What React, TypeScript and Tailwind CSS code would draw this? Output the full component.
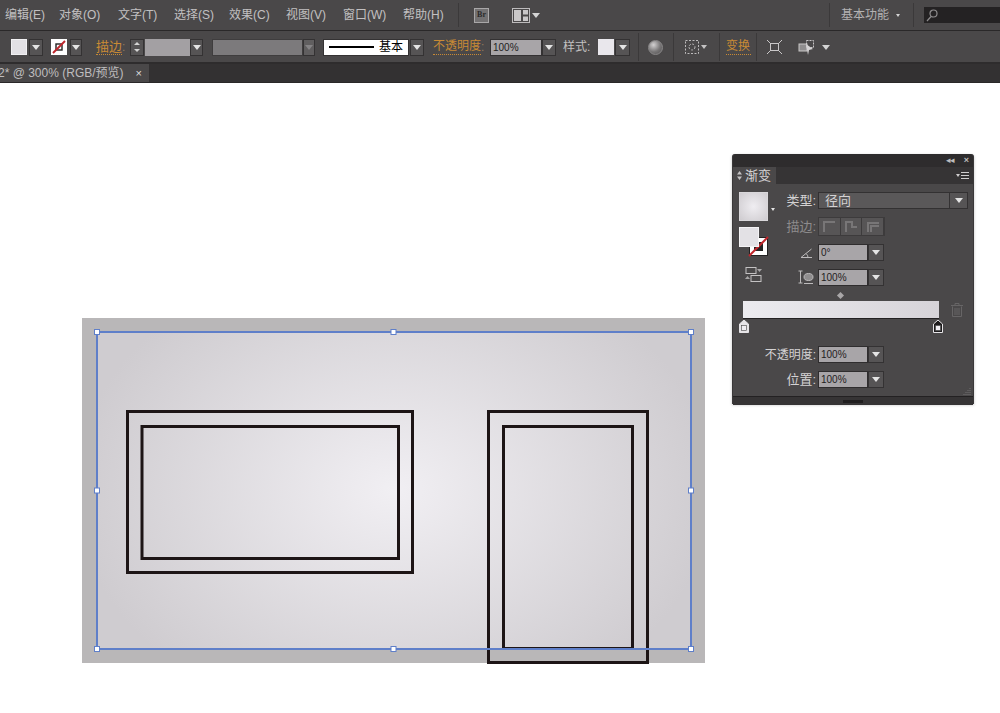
import React from 'react';

const Caret = ({ className = 'border-t-[#e4e4e4]' }: { className?: string }) => (
  <span className={`block w-0 h-0 border-x-[4px] border-x-transparent border-t-[5px] ${className}`} />
);

const Drop = ({ className = '', dim = false }: { className?: string; dim?: boolean }) => (
  <span className={`flex items-center justify-center h-full bg-[#565455] border border-[#343233] ${className}`}>
    <Caret className={dim ? 'border-t-[#858385]' : 'border-t-[#e4e4e4]'} />
  </span>
);

const Sep = ({ className = '' }: { className?: string }) => (
  <span className={`block w-px h-full bg-[#5c5a5b] border-l border-[#3b393a] ${className}`} />
);

const menus = [
  { label: '编辑(E)', w: 'w-[54px]' },
  { label: '对象(O)', w: 'w-[59px]' },
  { label: '文字(T)', w: 'w-[56px]' },
  { label: '选择(S)', w: 'w-[55px]' },
  { label: '效果(C)', w: 'w-[57px]' },
  { label: '视图(V)', w: 'w-[57px]' },
  { label: '窗口(W)', w: 'w-[60px]' },
  { label: '帮助(H)', w: 'w-[55px]' },
];

const MenuBar = () => (
  <div className="h-[31px] bg-[#4a4849] border-b border-[#2a2829] flex items-center pl-[5px] text-[12px] text-[#c2c0c1] shrink-0">
    {menus.map((m) => (
      <span key={m.label} className={`${m.w} whitespace-nowrap`}>{m.label}</span>
    ))}
    <Sep className="!h-[24px]" />
    <span className="ml-[15px] w-[15px] h-[15px] bg-[#737172] border border-[#a9a7a8] text-[8px] font-bold text-[#2b2a2a] flex items-center justify-center leading-none font-['Liberation_Serif',serif]">Br</span>
    <svg className="ml-[23px]" width="18" height="15" viewBox="0 0 18 15">
      <rect x="0.5" y="0.5" width="17" height="14" fill="#4a4849" stroke="#bdbbbc" />
      <rect x="2" y="2" width="7" height="11" fill="#c9c7c8" />
      <rect x="11" y="2" width="5" height="4.5" fill="#c9c7c8" />
      <rect x="11" y="8.5" width="5" height="4.5" fill="#c9c7c8" />
    </svg>
    <Caret className="ml-[2px] border-t-[#d4d4d4]" />
    <Sep className="ml-[289px] !h-[24px]" />
    <span className="ml-[11px] w-[47px] whitespace-nowrap text-[#b4b2b3]">基本功能</span>
    <Caret className="ml-[8px] !border-x-[2.5px] !border-t-[3px] border-t-[#d4d4d4]" />
    <Sep className="ml-[13px] !h-[24px]" />
    <span className="ml-[10px] flex-1 h-[16px] bg-[#242223] flex items-center pl-[2px]">
      <svg width="12" height="13" viewBox="0 0 12 13" fill="none" stroke="#8f8d8e" strokeWidth="1.2">
        <circle cx="7.5" cy="4.5" r="3.5" />
        <path d="M5 7.5 1 12" />
      </svg>
    </span>
  </div>
);

const ControlBar = () => (
  <div className="h-[33px] pt-[1px] bg-[#4a4849] border-b-2 border-[#2e2c2d] flex items-center pl-[11px] text-[12px] text-[#c2c0c1] shrink-0">
    <span className="w-[16px] h-[16px] bg-[#e2e0e4] border border-[#f1f0f2]" />
    <Drop className="ml-[2px] w-[14px] !h-[17px]" />
    <span className="ml-[8px] w-[16px] h-[16px] bg-white flex items-center justify-center">
      <svg width="16" height="16" viewBox="0 0 16 16" fill="none">
        <rect x="5" y="5" width="6" height="6" stroke="#222" strokeWidth="1.4" />
        <path d="M2 14 14 2" stroke="#c0272d" strokeWidth="2" />
      </svg>
    </span>
    <Drop className="ml-[3px] w-[12px] !h-[17px]" />
    <span className="ml-[14px] w-[26px] text-[13px] whitespace-nowrap text-[#c88a35] border-b border-dotted border-[#c88a35] leading-[15px]">描边</span>
    <span className="w-[8px] text-[#8f7a5c]">:</span>
    <span className="w-[14px] h-[17px] flex flex-col bg-[#565455] border border-[#343233] items-center justify-around">
      <Caret className="rotate-180 !border-x-[3px] !border-t-[3px] border-t-[#d4d4d4]" />
      <Caret className="!border-x-[3px] !border-t-[3px] border-t-[#d4d4d4]" />
    </span>
    <span className="ml-px w-[45px] h-[17px] bg-[#a3a0a3]" />
    <Drop className="w-[13px] !h-[17px]" />
    <span className="ml-[9px] w-[91px] h-[17px] bg-[#7c7a7c] border border-[#3f3d3e]" />
    <Drop className="w-[12px] !h-[17px] !bg-[#605e5f]" dim />
    <span className="ml-[8px] w-[86px] h-[17px] bg-white border border-[#343233] flex items-center text-black pl-[5px]">
      <span className="w-[45px] h-[2px] bg-black shrink-0" />
      <span className="ml-[5px] text-[12px] whitespace-nowrap leading-none">基本</span>
    </span>
    <Drop className="ml-[1px] w-[14px] !h-[17px]" />
    <span className="ml-[9px] w-[48px] text-[12px] whitespace-nowrap text-[#c88a35] border-b border-dotted border-[#c88a35] leading-[15px]">不透明度</span>
    <span className="w-[9px] text-[#8f7a5c]">:</span>
    <span className="w-[52px] h-[17px] bg-[#a8a5a8] text-[#222] text-[10px] pl-[2px] flex items-center border border-[#343233]">100%</span>
    <Drop className="w-[14px] !h-[17px]" />
    <span className="ml-[7px] w-[28px] whitespace-nowrap">样式:</span>
    <span className="ml-[7px] w-[16px] h-[16px] bg-[#e9e7ec]" />
    <Drop className="ml-px w-[15px] !h-[17px]" />
    <Sep className="ml-[8px] !h-[28px]" />
    <span className="ml-[9px] w-[15px] h-[15px] rounded-full bg-[radial-gradient(circle_at_35%_30%,#d2d0d1,#777576_55%,#4f4d4e)] border border-[#8a8889]" />
    <Sep className="ml-[10px] !h-[28px]" />
    <svg className="ml-[11px]" width="14" height="14" viewBox="0 0 14 14" fill="none" stroke="#bdbbbc" strokeDasharray="2 1.5">
      <rect x="0.5" y="0.5" width="13" height="13" />
      <circle cx="7" cy="7" r="3" />
    </svg>
    <Caret className="ml-[2px] !border-x-[3.5px] !border-t-[4px] border-t-[#c4c2c3]" />
    <Sep className="ml-[12px] !h-[28px]" />
    <span className="ml-[6px] w-[25px] text-[12px] whitespace-nowrap text-[#c88a35] border-b border-dotted border-[#c88a35] leading-[15px]">变换</span>
    <Sep className="ml-[5px] !h-[28px]" />
    <svg className="ml-[10px]" width="15" height="14" viewBox="0 0 15 14" fill="none" stroke="#c9c7c8">
      <rect x="3.5" y="3.5" width="8" height="7" />
      <path d="M0 0 3 3M15 0 12 3M0 14 3 11M15 14 12 11" />
    </svg>
    <svg className="ml-[16px]" width="18" height="15" viewBox="0 0 18 15" fill="none">
      <rect x="1" y="4" width="8" height="7" fill="#8f8d8e" stroke="#c9c7c8" />
      <rect x="8.5" y="0.5" width="7" height="7" stroke="#c9c7c8" strokeDasharray="2 1" />
      <path d="M8 4 15 9 11 10 10 15Z" fill="#d6d4d5" />
    </svg>
    <Caret className="ml-[6px] border-t-[#d4d4d4]" />
  </div>
);

const TabBar = () => (
  <div className="h-[19px] bg-[#333132] flex shrink-0 border-b border-[#2a2829] overflow-hidden">
    <span className="w-[149px] bg-[#4a4849] text-[12px] text-[#bfbdbe] flex items-center whitespace-nowrap leading-none">
      <span className="ml-[-2px]">2* @ 300% (RGB/预览)</span>
      <span className="ml-[12px] text-[11px] text-[#dedcdd]">×</span>
    </span>
  </div>
);

const Artwork = () => (
  <svg className="absolute left-[82px] top-[235px]" width="624" height="346" viewBox="82 318 624 346">
    <defs>
      <radialGradient id="fill" cx="394" cy="490" r="320" gradientUnits="userSpaceOnUse" gradientTransform="translate(394 490) scale(1 0.75) translate(-394 -490)">
        <stop offset="0" stopColor="#f1eff3" />
        <stop offset="1" stopColor="#cfccd0" />
      </radialGradient>
    </defs>
    <rect x="82" y="318" width="623" height="345" fill="#b9b7b8" />
    <rect x="97" y="332" width="594" height="317" fill="url(#fill)" />
    <g fill="none" stroke="#1d1516" strokeWidth="3">
      <rect x="127.5" y="411.5" width="285" height="161" />
      <rect x="142" y="426.5" width="256.5" height="132" />
      <rect x="488.5" y="411.5" width="159" height="251" />
      <rect x="503.5" y="426.5" width="129" height="222" />
    </g>
    <rect x="97" y="332" width="594" height="317" fill="none" stroke="#5f7fc9" strokeWidth="2" />
    {[
      [97, 332], [393.5, 332], [691, 332],
      [97, 490.5], [691, 490.5],
      [97, 649], [393.5, 649], [691, 649],
    ].map(([x, y]) => (
      <rect key={`${x}-${y}`} x={x - 2.5} y={y - 2.5} width="5" height="5" fill="#fff" stroke="#5f7fc9" />
    ))}
  </svg>
);

const Field = ({ value }: { value: string }) => (
  <span className="flex h-[17px] w-[66px]">
    <span className="w-[50px] bg-[#a8a5a8] border border-[#2f2d2e] text-[#1f1d1e] text-[10px] leading-none pl-[2px] flex items-center">{value}</span>
    <Drop className="w-[16px]" />
  </span>
);

const Row = ({ label, className = '', children }: { label?: React.ReactNode; className?: string; children: React.ReactNode }) => (
  <div className={`flex items-center leading-none ${className}`}>
    <span className="w-[33px] pr-[2px] flex justify-end whitespace-nowrap text-[13px]">{label}</span>
    {children}
  </div>
);

const Stop = ({ active = false }: { active?: boolean }) => (
  <svg width="10" height="13" viewBox="0 0 10 13">
    <path d="M5 0 9.5 4V12.5H.5V4Z" fill={active ? '#1d1b1c' : '#e6e4e7'} stroke="#e6e4e7" />
    <rect x="2.5" y="5.5" width="5" height="5" fill="#f0eef2" stroke="#444" strokeWidth="0.6" />
  </svg>
);

const GradientPanel = () => (
  <div className="absolute left-[732px] top-[71px] w-[242px] h-[250px] bg-[#4a4849] rounded-t-[3px] text-[12px] text-[#d4d2d3] flex flex-col shadow-[0_1px_3px_rgba(0,0,0,0.25)] border-x border-[#3a3839]">
    <div className="h-[13px] bg-[#2e2c2d] rounded-t-[3px] flex items-center justify-end pr-[4px] gap-[10px] text-[#bdbbbc] text-[9px] leading-none shrink-0">
      <span className="tracking-[-1px]">◂◂</span>
      <span className="font-bold">×</span>
    </div>
    <div className="h-[17px] bg-[#363435] flex items-stretch shrink-0">
      <span className="w-[43px] bg-[#4a4849] flex items-center pl-[4px] gap-[3px] whitespace-nowrap leading-none text-[13px]">
        <svg width="5" height="9" viewBox="0 0 5 9" fill="#c4c2c3"><path d="M2.500 0 5 3.500H0ZM2.500 9 5 5.500H0Z" /></svg>
        渐变
      </span>
      <span className="ml-auto mr-[4px] flex items-center gap-px">
        <Caret className="!border-x-[2.5px] !border-t-[3px] border-t-[#cfcdce]" />
        <svg width="8" height="7" viewBox="0 0 8 7" stroke="#cfcdce"><path d="M0 .5H8M0 3.5H8M0 6.5H8" /></svg>
      </span>
    </div>

    <div className="flex pt-[8px] pl-[6px]">
      <div className="w-[46px] shrink-0 flex flex-col">
        <div className="flex items-end">
          <span className="w-[29px] h-[29px] border border-[#d9d7da] bg-[radial-gradient(circle,#efedf1,#cfccd0)]" />
          <Caret className="ml-[3px] mb-[10px] !border-x-[2.5px] !border-t-[3px] border-t-[#e4e4e4]" />
        </div>
        <svg className="mt-[6px]" width="30" height="30" viewBox="0 0 30 30">
          <rect x="10.5" y="10.5" width="18" height="18" fill="#fff" stroke="#222" />
          <rect x="15" y="15" width="9" height="9" fill="#222" />
          <path d="M10 29 29 10" stroke="#c0272d" strokeWidth="2" />
          <rect x="0.5" y="0.5" width="19" height="19" fill="#e3e1e5" stroke="#f4f3f5" />
        </svg>
        <svg className="ml-[6px] mt-[10px]" width="17" height="15" viewBox="0 0 17 15" fill="#a9a7a8">
          <rect x="1" y="0.5" width="10" height="6" fill="none" stroke="#c4c2c3" />
          <path d="M12 2h5l-2.5 3z" />
          <rect x="6" y="8.5" width="10" height="6" fill="none" stroke="#c4c2c3" />
          <path d="M0 12h5L2.500 9z" />
        </svg>
      </div>
      <div className="flex flex-col">
        <Row label="类型:" className="h-[17px]">
          <span className="w-[150px] h-[17px] bg-[#5a5859] border border-[#333132] flex items-center pl-[6px] text-[13px]">
            <span className="flex-1 leading-none">径向</span>
            <Drop className="w-[18px] !border-y-0 !border-r-0" />
          </span>
        </Row>
        <Row label={<span className="text-[#8d8b8c]">描边:</span>} className="mt-[8px] h-[19px]">
          <span className="flex h-[19px] w-[67px] border border-[#3d3b3c]">
            {['M4 14V4H15', 'M4 14V4H10V9H15', 'M4 14V5H15M7 14V8H15'].map((d) => (
              <span key={d} className="flex-1 bg-[#575556] border-r border-[#3d3b3c] flex items-center justify-center">
                <svg width="18" height="17" viewBox="0 0 18 17" fill="none" stroke="#787677" strokeWidth="2"><path d={d} /></svg>
              </span>
            ))}
          </span>
        </Row>
        <Row
          className="mt-[8px] h-[17px]"
          label={
            <svg className="mr-[4px]" width="12" height="10" viewBox="0 0 12 10" fill="none" stroke="#bdbbbc">
              <path d="M11.500 1 1 9.500H12M6 5.500Q8 7 8 9.500" />
            </svg>
          }
        >
          <Field value="0°" />
        </Row>
        <Row
          className="mt-[8px] h-[17px]"
          label={
            <svg className="mr-[2px]" width="16" height="15" viewBox="0 0 16 15" fill="none" stroke="#bdbbbc">
              <path d="M2.500 1V13M.5 1H4.500M.5 13H4.500M6 13.500H15" />
              <ellipse cx="10.500" cy="7" rx="4.500" ry="3.500" fill="#8f8d8e" />
            </svg>
          }
        >
          <Field value="100%" />
        </Row>
      </div>
    </div>

    <div className="flex justify-center mt-[7px] pr-[26px] h-[6px] items-center">
      <span className="w-[5px] h-[5px] rotate-45 bg-[#a9a7a8]" />
    </div>

    <div className="flex items-center mt-[3px] pl-[10px]">
      <span className="w-[196px] h-[18px] bg-[linear-gradient(to_right,#ecebef,#d6d3d8)] border-b border-[#232122]" />
      <svg className="ml-[12px]" width="12" height="14" viewBox="0 0 12 14" fill="none" stroke="#676566">
        <path d="M0 2.500H12M4 2.500V.5H8V2.500M1.500 3.500V13.500H10.500V3.500M4 5V12M6 5V12M8 5V12" />
      </svg>
    </div>
    <div className="flex justify-between w-[210px] pl-[6px] mt-[1px] h-[13px]">
      <Stop />
      <Stop active />
    </div>

    <div className="mt-[13px] pl-[31px] flex flex-col gap-[8px] leading-none">
      <div className="flex items-center h-[17px]">
        <span className="w-[54px] pr-[2px] text-right whitespace-nowrap">不透明度:</span>
        <Field value="100%" />
      </div>
      <div className="flex items-center h-[17px]">
        <span className="w-[54px] pr-[2px] text-right whitespace-nowrap text-[13px]">位置:</span>
        <Field value="100%" />
      </div>
    </div>

    <div className="mt-auto flex justify-end pr-[2px]">
      <svg width="9" height="7" viewBox="0 0 9 7" stroke="#5e5c5d"><path d="M7 .5H9M5 2.500H9M3 4.500H9M1 6.500H9" /></svg>
    </div>
    <div className="mt-[1px] h-[9px] bg-[#363435] border-t border-[#232122] flex items-center justify-center shrink-0">
      <span className="w-[20px] h-[3px] bg-[#1f1d1e]" />
    </div>
  </div>
);

export default function App() {
  return (
    <div className="w-[1000px] h-[713px] overflow-hidden bg-white flex flex-col font-['Liberation_Sans','Noto_Sans_CJK_SC',sans-serif]">
      <MenuBar />
      <ControlBar />
      <TabBar />
      <div className="relative flex-1 bg-white">
        <Artwork />
        <GradientPanel />
      </div>
    </div>
  );
}
